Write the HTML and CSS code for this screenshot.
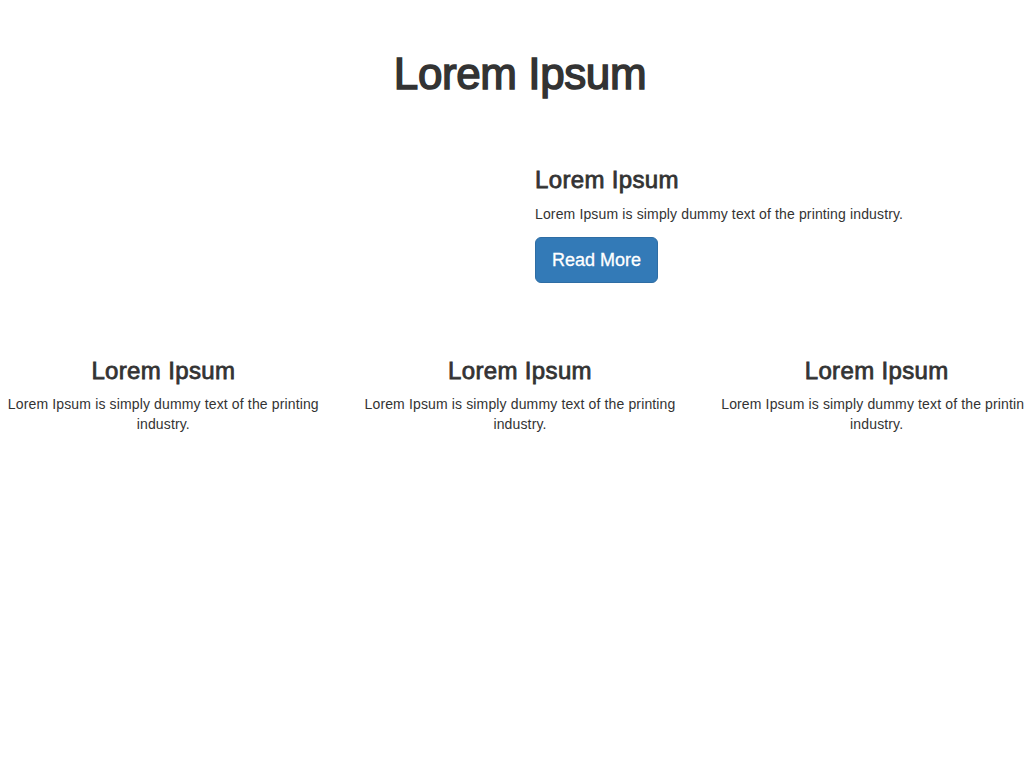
FILE: index.html
```html
<!DOCTYPE html>
<html lang="en">
<head>
<meta charset="utf-8">
<title>Lorem Ipsum</title>
<link rel="stylesheet" href="styles.css">
</head>
<body>
<div class="page">
  <h1 class="title">Lorem Ipsum</h1>

  <div class="row feature">
    <div class="col"></div>
    <div class="col">
      <h3 class="heading">Lorem Ipsum</h3>
      <p class="text">Lorem Ipsum is simply dummy text of the printing industry.</p>
      <div class="actions"><a class="btn" href="#">Read More</a></div>
    </div>
  </div>

  <div class="row cards">
    <div class="col card">
      <h3 class="heading">Lorem Ipsum</h3>
      <p class="text">Lorem Ipsum is simply dummy text of the printing industry.</p>
    </div>
    <div class="col card">
      <h3 class="heading">Lorem Ipsum</h3>
      <p class="text">Lorem Ipsum is simply dummy text of the printing industry.</p>
    </div>
    <div class="col card">
      <h3 class="heading">Lorem Ipsum</h3>
      <p class="text">Lorem Ipsum is simply dummy text of the printing industry.</p>
    </div>
  </div>
</div>
</body>
</html>
```

FILE: styles.css
```css
html, body {
  overflow-x: hidden;
}

body {
  margin: 0;
  background: #fff;
  color: #333;
  font-family: "Liberation Sans", Arial, sans-serif;
  font-size: 14px;
  line-height: 20px;
}

.page {
  width: 1040px;
}

.title {
  margin: 50px 0 0;
  text-align: center;
  font-size: 44px;
  line-height: 1.1;
  font-weight: 400;
  letter-spacing: -0.4px;
  -webkit-text-stroke: 1.5px #333;
}

.row {
  display: flex;
  margin: 0 -15px;
}

.col {
  flex: 1 1 0;
  min-width: 0;
  padding: 0 15px;
}

.feature {
  margin-top: 69px;
}

.heading {
  margin: 0 0 10px;
  font-size: 24px;
  line-height: 1.1;
  font-weight: 400;
  letter-spacing: 0.35px;
  -webkit-text-stroke: 0.8px #333;
}

.text {
  margin: 0 0 13px;
  letter-spacing: 0.14px;
}

.actions {
  display: flex;
}

.btn {
  display: block;
  padding: 10px 16px;
  font-size: 18px;
  line-height: 24px;
  color: #fff;
  background: #337ab7;
  border: 1px solid #2e6da4;
  border-radius: 6px;
  text-decoration: none;
  -webkit-text-stroke: 0.3px #fff;
}

.cards {
  margin-top: 75px;
}

.card {
  text-align: center;
}

.card .text {
  margin: 0;
}
```
